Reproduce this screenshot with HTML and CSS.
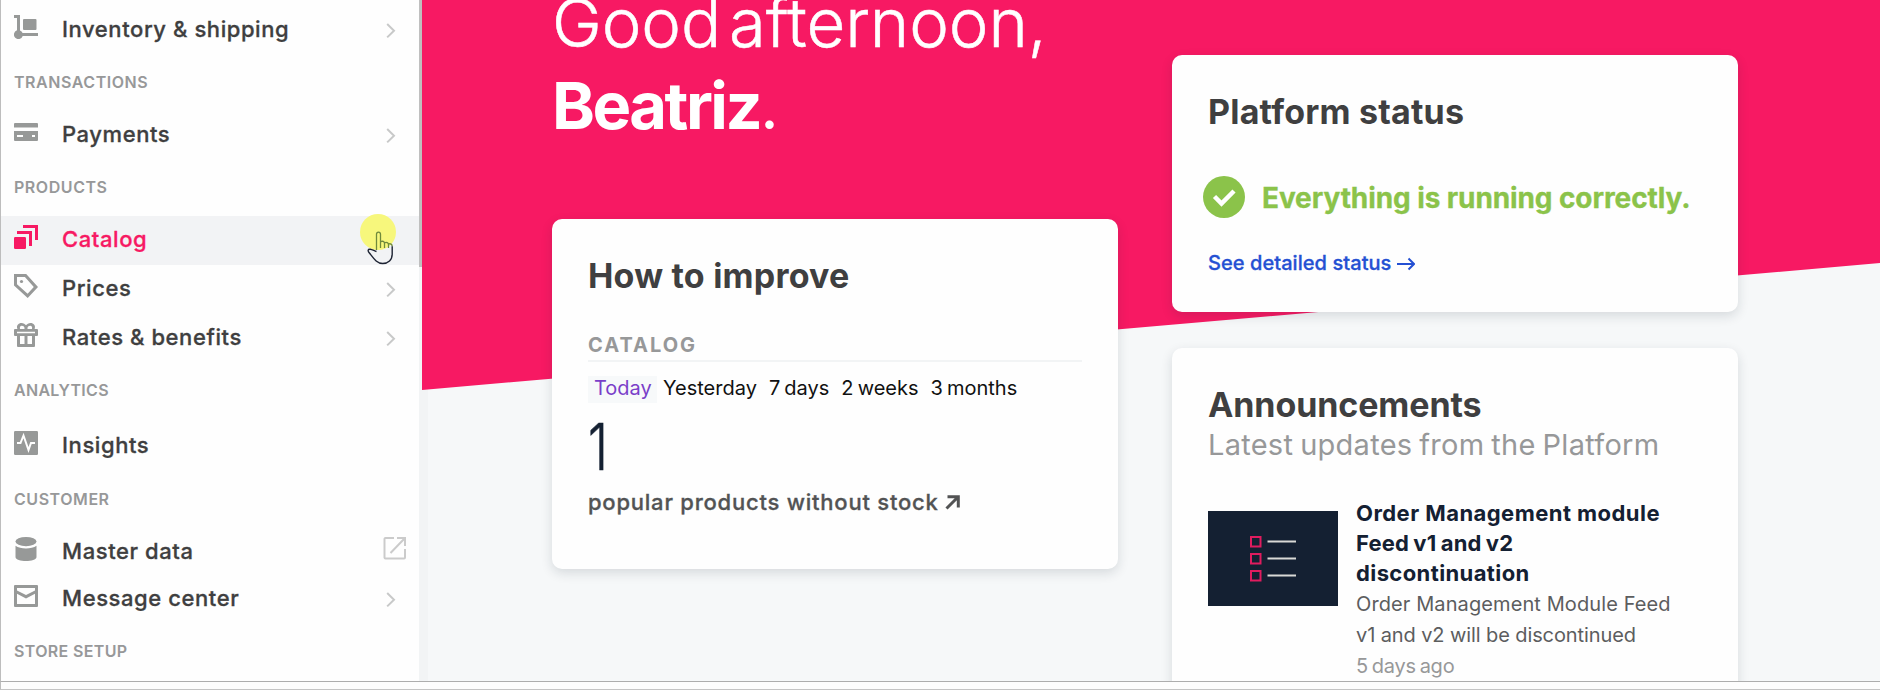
FILE: index.html
```
<!DOCTYPE html>
<html lang="en">
<head>
<meta charset="utf-8">
<title>Admin home</title>
<link rel="stylesheet" href="styles.css">
</head>
<body>
<div class="app">
  <aside class="sidebar">
    <nav class="nav">
      <a class="item item-first"><svg class="icon" viewBox="0 0 24 24"><path d="M0 0h6v15.500a4.500 4.500 0 0 1 2.600 2.500H24v3H8.700A4.500 4.500 0 1 1 3 15.300V3H0z"/><rect x="9" y="4" width="13.500" height="11" rx="1"/></svg><span class="label inventory">Inventory &amp; shipping</span><svg class="chevron" viewBox="0 0 10 16"><path d="M1.200 1l6.800 6.700-6.800 6.700"/></svg></a>
      <h2 class="group">TRANSACTIONS</h2>
      <a class="item"><svg class="icon" viewBox="0 0 24 24"><path d="M1 3h22a1 1 0 0 1 1 1v3.500H0V4a1 1 0 0 1 1-1z"/><path fill-rule="evenodd" d="M0 11h24v9a1 1 0 0 1-1 1H1a1 1 0 0 1-1-1zM3 15v2h6v-2zM18 15v2h3v-2z"/></svg><span class="label">Payments</span><svg class="chevron" viewBox="0 0 10 16"><path d="M1.200 1l6.800 6.700-6.800 6.700"/></svg></a>
      <h2 class="group products">PRODUCTS</h2>
      <a class="item active"><svg class="icon" viewBox="0 0 24 24"><rect y="12" width="12" height="12" rx="1.200"/><path d="M3 6h15v15h-3V9H3z"/><path d="M9 0h15v15h-3V3H9z"/></svg><span class="label catalog">Catalog</span></a>
      <a class="item"><svg class="icon" viewBox="0 0 24 24"><path fill-rule="evenodd" d="M0 0h12.200L24 13 13.700 24 0 11.500zM3 3v7.200l10.600 9.600 6.200-6.700L10.900 3z"/><circle cx="7.500" cy="7.500" r="1.600"/></svg><span class="label prices">Prices</span><svg class="chevron" viewBox="0 0 10 16"><path d="M1.200 1l6.800 6.700-6.800 6.700"/></svg></a>
      <a class="item"><svg class="icon" viewBox="0 0 24 24"><path fill-rule="evenodd" d="M3.400 6C2 2.500 4.500 0 7.500 0 9.500 0 11 1 12 2.300 13 1 14.500 0 16.500 0c3 0 5.500 2.500 4.100 6H23a1 1 0 0 1 1 1v5a1 1 0 0 1-1 1h-2v10a1 1 0 0 1-1 1H4a1 1 0 0 1-1-1V13H1a1 1 0 0 1-1-1V7a1 1 0 0 1 1-1zM6 6h4.500c.3-2-1-3.200-2.700-3.200C6.200 2.800 5.500 4.300 6 6zM13.500 6H18c.5-1.700-.2-3.200-1.800-3.200-1.700 0-3 1.200-2.700 3.200zM3 8.800v1.400h18V8.800zM6 13v8h4.500v-8zM13.500 13v8H18v-8z"/></svg><span class="label rates">Rates &amp; benefits</span><svg class="chevron" viewBox="0 0 10 16"><path d="M1.200 1l6.800 6.700-6.800 6.700"/></svg></a>
      <h2 class="group tall analytics">ANALYTICS</h2>
      <a class="item"><svg class="icon" viewBox="0 0 24 24"><rect width="24" height="24" rx="1.200"/><path class="pulse" d="M3 12h3.500l3-7.500 5 14.500 2.500-7h4"/></svg><span class="label">Insights</span></a>
      <h2 class="group customer">CUSTOMER</h2>
      <a class="item short"><svg class="icon" viewBox="0 0 24 24"><ellipse cx="12" cy="4.600" rx="10.500" ry="4.600"/><path d="M1.500 8.800c5 3.600 16 3.600 21 0V20c0 5.300-21 5.300-21 0z"/></svg><span class="label master">Master data</span><svg class="external" viewBox="0 0 24 24"><path d="M12 2H3.500a1 1 0 0 0-1 1v18.500a1 1 0 0 0 1 1H22a1 1 0 0 0 1-1V13M15 2h8v8M22.500 2.500L8.500 17"/></svg></a>
      <a class="item"><svg class="icon" viewBox="0 0 24 24"><path fill-rule="evenodd" d="M1 1h22a1 1 0 0 1 1 1v20a1 1 0 0 1-1 1H1a1 1 0 0 1-1-1V2a1 1 0 0 1 1-1zM3 4v2.500l9 4.500 9-4.500V4zM3 9.800V20h18V9.800L12 14.500z"/></svg><span class="label message">Message center</span><svg class="chevron" viewBox="0 0 10 16"><path d="M1.200 1l6.800 6.700-6.800 6.700"/></svg></a>
      <h2 class="group store">STORE SETUP</h2>
    </nav>
    <div class="track"><div class="thumb"></div></div>
    <svg class="pointer" viewBox="0 0 38 52"><circle cx="19" cy="18" r="18" fill="#f7f77c"/><path d="M17.500 36V20.300c0-3 4-3 4 0v7c1.700-.8 3.400-.3 4 1.200 1.600-.7 3.200-.2 4 1.200 2-.6 3.700.3 3.700 2.600V40c0 6-4 9.500-9.500 9.500-6 0-9-5-13.300-10.500-2-2.500-1.500-4 .8-3.800 2 .2 4 1.600 6.300 2.300z" class="hand-fill"/><path d="M17.500 36V20.300c0-3 4-3 4 0V34M21.500 27.800c2-1.200 4-.3 4 1.700V34M25.500 28.800c2-1 4 0 4 2V34M29.500 30c2-.7 3.700.3 3.700 2.300" class="hand-top"/><path d="M33.200 32.300V40c0 6-4 9.500-9.500 9.500-6 0-9-5-13.300-10.500-2-2.500-1.500-4 .8-3.800 2 .2 4 1.600 6.300 2.300" class="hand-line"/></svg>
  </aside>
  <main class="main">
    <div class="hero"></div>
    <div class="columns">
      <section class="column">
        <h1 class="greeting"><span class="hello">Good afternoon,</span><br><b>Beatriz</b><span class="dot">.</span></h1>
        <article class="card improve">
          <h3 class="title">How to improve</h3>
          <h4 class="section">CATALOG</h4>
          <div class="tabs"><span class="tab on">Today</span><span class="tab">Yesterday</span><span class="tab tight">7 days</span><span class="tab tight">2 weeks</span><span class="tab tight">3 months</span></div>
          <div class="count">1</div>
          <div class="caption"><span>popular products without stock</span><svg class="arrow-ne" viewBox="0 0 15 15"><path d="M1.500 13.500L12 3M2.500 1.700h10.800v10.800"/></svg></div>
        </article>
      </section>
      <section class="column right">
        <article class="card status">
          <h3 class="title platform">Platform status</h3>
          <div class="state"><svg class="check" viewBox="0 0 42 42"><circle cx="21" cy="21" r="21"/><path d="M11.500 20.500l7 7L31 15"/></svg><span>Everything is running correctly.</span></div>
          <a class="link"><span>See detailed status</span><svg class="arrow-e" viewBox="0 0 18 14"><path d="M0 7h17M11.500 1.500L17 7l-5.500 5.500"/></svg></a>
        </article>
        <article class="card news">
          <h3 class="title announce">Announcements</h3>
          <p class="subtitle">Latest updates from the Platform</p>
          <div class="post">
            <svg class="cover" viewBox="0 0 130 95"><rect width="130" height="95" fill="#142032"/><path d="M43 26h9.500v9.500H43zM43 43h9.500v9.500H43zM43 60h9.500v9.500H43z" class="boxes"/><path d="M59.500 30.500h28.500M59.500 47.500h28.500M59.500 64.500h28.500" class="rows"/></svg>
            <div class="post-text">
              <h4 class="post-title">Order Management module<br><span class="feed">Feed v1 and v2</span><br><span class="disc">discontinuation</span></h4>
              <p class="post-body"><span class="body-top">Order Management Module Feed</span><br>v1 and v2 will be discontinued</p>
              <p class="post-date">5 days ago</p>
            </div>
          </div>
        </article>
      </section>
    </div>
  </main>
</div>
<footer class="bottom"></footer>
</body>
</html>
```
FILE: styles.css
```
* { box-sizing: border-box; }
body { margin: 0; width: 1880px; height: 690px; overflow: hidden; background: #fdfdfd; font-family: Inter, "Open Sans", sans-serif; color: #3f3f40; }
h1, h2, h3, h4, p { margin: 0; }

.app { display: flex; height: 681px; overflow: hidden; }

/* Sidebar */
.sidebar { position: relative; display: flex; width: 422px; flex: none; border-left: 1px solid #bdbdbd; background: #fefefe; }
.nav { width: 418px; padding-top: 6px; }
.item { display: flex; height: 49px; padding-left: 13px; align-items: flex-start; font-size: 22px; font-weight: 500; line-height: 46px; letter-spacing: .58px; white-space: nowrap; }
.label, .caption span, .link span { -webkit-text-stroke: .3px currentColor; }
.item.short { height: 47px; }
.active { background: #f2f3f5; color: #f71963; }
.icon { width: 24px; height: 24px; flex: none; margin: 9px 24px 0 0; fill: #979998; }
.active .icon { fill: #f71963; }
.label { width: 324px; flex: none; }
.pulse { fill: none; stroke: #fefefe; stroke-width: 2; }
.chevron { width: 10px; height: 16px; margin-top: 17px; fill: none; stroke: #c8c9c9; stroke-width: 2; }
.external { width: 24px; height: 24px; margin: 8px 0 0 -4px; fill: none; stroke: #cbcbcb; stroke-width: 2; }
.group { height: 56px; padding-left: 13px; font-size: 16px; font-weight: 600; line-height: 54px; letter-spacing: .55px; color: #979899; }
.group.tall { height: 59px; }
.group.analytics { letter-spacing: .3px; }
.group.store { letter-spacing: .35px; }
.group.customer { height: 57px; line-height: 56px; }
.track { width: 3px; margin-left: auto; background: #f2f4f5; }
.thumb { height: 267px; background: #bfbfbf; }
.pointer { position: absolute; left: 358px; top: 214px; width: 38px; height: 52px; }
.hand-fill { fill: #fff; clip-path: polygon(0 36px, 38px 30px, 38px 52px, 0 52px); }
.hand-top { fill: none; stroke: #6f8a3c; stroke-width: 1.3; }
.hand-line { fill: none; stroke: #1d2333; stroke-width: 1.4; }

/* Main area */
.main { position: relative; flex: 1; border-left: 6px solid #f2f4f5; background: #f6f8f9; }
.hero { position: absolute; inset: 0 0 0 -6px; background: #f71963; clip-path: polygon(0 0, 100% 0, 100% 263px, 0 390px); }
.columns { position: relative; display: flex; gap: 54px; padding-left: 124px; }
.column { width: 566px; flex: none; }
.greeting { height: 164px; margin: -18px 0 73px; font-size: 64px; font-weight: 300; line-height: 82px; color: #fff; white-space: nowrap; }
.hello { font-size: 67px; letter-spacing: -.1px; word-spacing: -11px; -webkit-text-stroke: .5px #fff; }
.greeting b { font-size: 65px; font-weight: 700; letter-spacing: -2.500px; }
.dot { font-weight: 400; }
.card { padding: 37px 36px 36px; border-radius: 10px; background: #fefefe; box-shadow: 0 4px 12px rgba(20, 32, 50, .14); white-space: nowrap; }
.improve { height: 350px; }
.title { font-size: 34px; font-weight: 700; line-height: 40px; letter-spacing: .2px; }

.section { margin-top: 37px; padding-bottom: 3px; border-bottom: 2px solid #f2f4f5; font-size: 20px; font-weight: 700; line-height: 24px; letter-spacing: 2px; color: #979899; }
.tabs { display: flex; margin-top: 14px; font-size: 20px; line-height: 25px; color: #111; }
.tab { height: 27px; padding: 0 6px; }
.tight { letter-spacing: 0; word-spacing: -1.500px; }
.on { width: 69px; background: #f7f9fa; color: #7a3fc9; }
.count { margin-top: 14px; font-size: 65px; font-weight: 300; line-height: 60px; color: #142032; transform: scaleX(.78); transform-origin: 0 50%; -webkit-text-stroke: .6px #142032; }
.caption { display: flex; margin-top: 10px; font-size: 22px; font-weight: 500; line-height: 30px; letter-spacing: .77px; color: #525354; }
.arrow-ne { width: 15px; height: 15px; margin: 8px 0 0 6px; fill: none; stroke: #525354; stroke-width: 3; }

.right { padding-top: 55px; }
.status { height: 257px; }
.state { display: flex; gap: 17px; height: 42px; margin: 44px 0 33px -5px; font-size: 28px; font-weight: 700; line-height: 44px; letter-spacing: -.1px; color: #8bc34a; -webkit-text-stroke: .3px currentColor; }
.check { width: 42px; height: 42px; fill: #8bc34a; }
.check path { fill: none; stroke: #fff; stroke-width: 4.500; }
.link { display: flex; font-size: 20px; font-weight: 500; line-height: 24px; letter-spacing: .06px; color: #2450d3; }
.arrow-e { width: 18px; height: 14px; margin: 6px 0 0 6px; fill: none; stroke: #2450d3; stroke-width: 2; }

.news { height: 400px; margin-top: 36px; }
.announce { letter-spacing: -.1px; }
.subtitle { margin-top: 3px; font-size: 29px; line-height: 34px; letter-spacing: .27px; word-spacing: -1.500px; color: #979899; }
.post { display: flex; gap: 18px; margin-top: 36px; }
.cover { width: 130px; height: 95px; margin-top: 13px; flex: none; }
.boxes { fill: none; stroke: #e01c5f; stroke-width: 2; }
.rows { stroke: #d9d9d6; stroke-width: 2; }
.post-title { font-size: 22px; font-weight: 700; line-height: 30px; letter-spacing: .45px; color: #142032; }
.feed { letter-spacing: .2px; word-spacing: -1.200px; }
.disc { letter-spacing: .4px; }
.post-body, .post-date { font-size: 20px; line-height: 31px; color: #5c5d5e; }
.post-body { padding-top: 1px; letter-spacing: -.1px; }
.body-top { letter-spacing: .1px; }
.post-date { letter-spacing: -.25px; word-spacing: -1.500px; color: #979899; }

.bottom { height: 9px; border-top: 1px solid #adadad; border-bottom: 1px solid #c4c4c4; border-left: 1px solid #bdbdbd; }
```
